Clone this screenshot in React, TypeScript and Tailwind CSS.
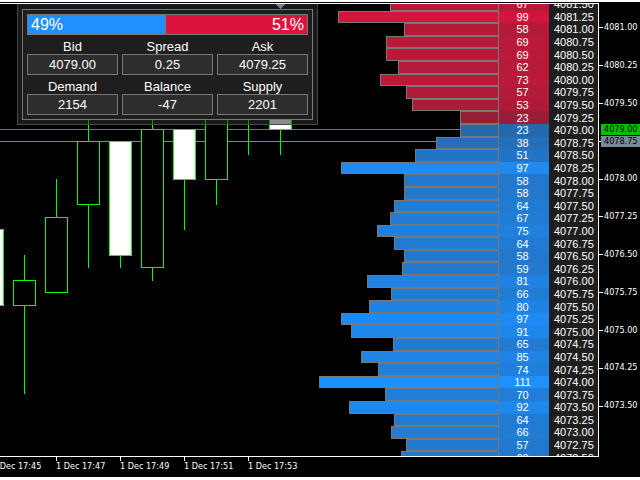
type Level = {
  price: string;
  volume: number;
  side: "ask" | "bid";
};

const BEST_ASK = 4079.25;
const MAX_VOLUME = 111;

const volumes = [
  67, 99, 58, 69, 69, 62, 73, 57, 53, 23, 23, 38, 51, 97, 58, 58, 64, 67, 75,
  64, 58, 59, 81, 66, 80, 97, 91, 65, 85, 74, 111, 70, 92, 64, 66, 57, 60,
];

const levels: Level[] = volumes.map((volume, i) => {
  const price = 4081.5 - i * 0.25;
  return {
    price: price.toFixed(2),
    volume,
    side: price >= BEST_ASK ? "ask" : "bid",
  };
});

const stats = [
  { label: "Bid", value: "4079.00" },
  { label: "Spread", value: "0.25" },
  { label: "Ask", value: "4079.25" },
  { label: "Demand", value: "2154" },
  { label: "Balance", value: "-47" },
  { label: "Supply", value: "2201" },
];

// x is the wick, all y values are in chart pixels
const candles = [
  { x: -8, high: 229, top: 229, bottom: 305, low: 305, filled: true },
  { x: 24, high: 255, top: 280, bottom: 305, low: 393, filled: false },
  { x: 56, high: 179, top: 217, bottom: 292, low: 292, filled: false },
  { x: 88, high: 90, top: 141, bottom: 204, low: 267, filled: false },
  { x: 120, high: 141, top: 141, bottom: 255, low: 267, filled: true },
  { x: 152, high: 90, top: 129, bottom: 267, low: 280, filled: false },
  { x: 184, high: 129, top: 129, bottom: 179, low: 229, filled: true },
  { x: 216, high: 90, top: 100, bottom: 179, low: 204, filled: false },
  { x: 248, high: 90, top: 90, bottom: 90, low: 154, filled: false },
  { x: 280, high: 90, top: 104, bottom: 129, low: 154, filled: true },
];

// the null slot is covered by the last price tag
const axisPrices = [
  "4081.00",
  "4080.25",
  "4079.50",
  null,
  "4078.00",
  "4077.25",
  "4076.50",
  "4075.75",
  "4075.00",
  "4074.25",
  "4073.50",
];

const times = ["17:45", "17:47", "17:49", "17:51", "17:53"];

// busier levels are brighter
const shade = ({ volume, side }: Level) => {
  const full = side === "ask" ? [220, 20, 60] : [30, 144, 255];
  const t = 0.5 + (0.5 * volume) / MAX_VOLUME;
  const rgb = full.map((c) => Math.round(45 + (c - 45) * t));
  return `rgb(${rgb.join(",")})`;
};

const Candles = () => (
  <svg
    className="absolute top-0 left-0 h-[452px] w-[500px]"
    viewBox="0 4 500 452"
    shapeRendering="crispEdges"
    aria-hidden="true"
  >
    <path d="M0 129.5H500" stroke="#00c000" />
    <path d="M0 141.5H500" stroke="#778899" />
    {candles.map((c) => (
      <g key={c.x} stroke="#00ff00">
        <path d={`M${c.x + 0.5} ${c.high}V${c.low + 1}`} />
        <rect
          x={c.x - 10.5}
          y={c.top + 0.5}
          width={22}
          height={c.bottom - c.top}
          fill={c.filled ? "#ffffff" : "#000000"}
        />
      </g>
    ))}
  </svg>
);

const ShiftMarker = () => (
  <svg
    className="absolute top-0 left-[275px] h-[5px] w-[11px]"
    viewBox="0 0 11 5"
    shapeRendering="crispEdges"
    aria-hidden="true"
  >
    <path d="M1 0h9v1H1zM2 1h7v1H2zM3 2h5v1H3zM4 3h3v1H4zM5 4h1v1H5z" fill="#708090" />
  </svg>
);

const Ladder = () => (
  <ul className="relative -mt-[6px] -mb-[8px] flex min-h-0 flex-1 flex-col text-[11px] leading-[12px]">
    {levels.map((level) => (
      <li key={level.price} className="flex min-h-0 flex-1">
        <div className="flex grow justify-end">
          <div className="flex w-[178px] justify-end">
            <div
              className="box-content shrink-0 border border-[#787878]"
              style={{
                width: `${(level.volume / MAX_VOLUME) * 100}%`,
                backgroundColor: shade(level),
              }}
            />
          </div>
        </div>
        <span
          className="flex w-[50px] items-center justify-center pr-[3px]"
          style={{ backgroundColor: shade(level) }}
        >
          {level.volume}
        </span>
        <span className="flex w-[49px] items-center bg-[#1e1e1e] pl-[5px]">
          {level.price}
        </span>
      </li>
    ))}
  </ul>
);

const Panel = () => (
  <section className="absolute top-0 left-[17px] w-[301px] border border-t-0 border-[#484848] bg-[#2e2e2e]/55 px-[4px] pt-[5px] pb-[4px]">
    <div className="border border-[#787878] bg-[#1e1e1e] p-[4px]">
      <div className="flex h-[21px] border border-[#787878] text-[16px] leading-[19px]">
        <span className="w-[138px] border-r border-[#787878] bg-[#1e90ff] pl-[3px]">
          49%
        </span>
        <span className="grow bg-[#dc143c] pr-[3px] text-right">51%</span>
      </div>
      <dl className="mt-[4px] grid grid-cols-3 gap-[4px]">
        {stats.map((stat) => (
          <div key={stat.label} className="text-center text-[13px]">
            <dt className="leading-[15px]">{stat.label}</dt>
            <dd className="h-[21px] border border-[#787878] bg-[#2d2d2d] leading-[19px]">
              {stat.value}
            </dd>
          </div>
        ))}
      </dl>
    </div>
  </section>
);

const PriceAxis = () => (
  <aside className="relative w-[41px] pt-[6px] font-['DejaVu_Sans_Condensed','DejaVu_Sans',sans-serif] text-[9px]">
    <ul className="flex h-[416px] flex-col">
      {axisPrices.map((price, i) => (
        <li key={i} className="flex flex-1 items-center">
          <i className="mr-px h-px w-[4px] bg-white" />
          {price}
        </li>
      ))}
    </ul>
    <div className="absolute top-[121px] right-0 left-[2px] flex flex-col gap-px text-black">
      <span className="h-[11px] bg-[#00c000] pl-[3px] leading-[11px]">
        4079.00
      </span>
      <span className="h-[11px] bg-[#778899] pl-[3px] leading-[11px]">
        4078.75
      </span>
    </div>
  </aside>
);

const TimeAxis = () => (
  <ul className="-ml-[8px] flex font-['DejaVu_Sans_Condensed','DejaVu_Sans',sans-serif] text-[9px]">
    {times.map((time) => (
      <li key={time} className="w-[64px] whitespace-nowrap">
        <i className="block h-[4px] w-px bg-white" />
        <span className="block leading-[11px]">1 Dec {time}</span>
      </li>
    ))}
  </ul>
);

const App = () => {
  return (
    <div className="flex min-h-screen flex-col bg-white pt-[2px] pb-[3px] font-['Liberation_Sans',Arial,sans-serif] text-white">
      <main className="flex grow flex-col bg-black pt-px">
        <div className="flex">
          <div className="relative flex h-[454px] grow flex-col overflow-hidden border-y border-r border-white">
            <Candles />
            <Ladder />
            <Panel />
            <ShiftMarker />
          </div>
          <PriceAxis />
        </div>
        <TimeAxis />
      </main>
    </div>
  );
};

export default App;
